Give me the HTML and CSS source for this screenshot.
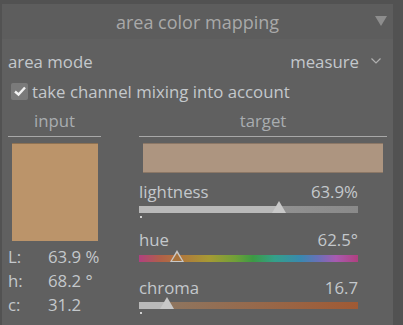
FILE: index.html
```html
<!DOCTYPE html>
<html>
<head>
<meta charset="utf-8">
<link rel="stylesheet" href="styles.css">
</head>
<body>
<div class="panel">
  <div class="header">
    <span class="title">area color mapping</span>
    <span class="collapse"></span>
  </div>
  <div class="content">
    <div class="row combo">
      <span>area mode</span>
      <span class="combo-value">measure <svg class="chev" width="12" height="8" viewBox="0 0 12 8"><path d="M1.5 1.5 L6 6 L10.5 1.5" fill="none" stroke="#b0b0b0" stroke-width="1.2"/></svg></span>
    </div>
    <div class="row check">
      <span class="box"><svg width="14" height="12" viewBox="0 0 14 12"><path d="M2 6.5 L5.5 9.5 L12 2.5" fill="none" stroke="#f2f2f2" stroke-width="2.4"/></svg></span>
      <span>take channel mixing into account</span>
    </div>
    <div class="columns">
      <div class="col-in">
        <div class="sect">input</div>
        <div class="swatch-in"></div>
        <div class="lab"><span>L:</span><span>63.9 %</span></div>
        <div class="lab"><span>h:</span><span>68.2 °</span></div>
        <div class="lab"><span>c:</span><span>31.2</span></div>
      </div>
      <div class="col-out">
        <div class="sect">target</div>
        <div class="swatch-out"></div>
        <div class="sliders">
          <div class="slider">
            <div class="sl-label"><span>lightness</span><span>63.9%</span></div>
            <div class="track light"><span class="fill" style="width:64%"></span><span class="marker" style="left:64%"></span></div>
            <div class="dot"></div>
          </div>
          <div class="slider">
            <div class="sl-label"><span>hue</span><span>62.5°</span></div>
            <div class="track hue"><span class="marker huem" style="left:17.4%"></span></div>
          </div>
          <div class="slider">
            <div class="sl-label"><span>chroma</span><span>16.7</span></div>
            <div class="track chroma"><span class="fill" style="width:13%"></span><span class="marker" style="left:13%"></span></div>
            <div class="dot"></div>
          </div>
        </div>
      </div>
    </div>
  </div>
</div>
</body>
</html>
```
FILE: styles.css
```css
html, body {
  margin: 0;
  padding: 0;
  background: #525252;
  width: 403px;
  height: 325px;
  overflow: hidden;
}
body {
  font-family: "Open Sans", "Noto Sans", sans-serif;
  color: #c4c8cc;
  padding: 4px 0 0 2px;
  box-sizing: border-box;
}
.panel {
  width: 391px;
  height: 321px;
  background: #606060;
}
.header {
  height: 35px;
  background: #5d5d5d;
  display: flex;
  align-items: center;
  justify-content: center;
  position: relative;
}
.title {
  font-size: 18px;
  color: #a9a9a9;
}
.collapse {
  position: absolute;
  right: 6px;
  top: 12px;
  width: 0;
  height: 0;
  border-left: 6px solid transparent;
  border-right: 6px solid transparent;
  border-top: 10px solid #8d8d8d;
}
.content {
  padding: 0 6px;
}
.row {
  display: flex;
  align-items: center;
  font-size: 16.8px;
}
.combo {
  height: 28px;
  margin-top: 8px;
  justify-content: space-between;
  padding-right: 5px;
}
.combo-value {
  display: flex;
  align-items: center;
  gap: 11px;
}
.check {
  height: 26px;
  gap: 4px;
  margin-left: 3px;
  margin-top: 3px;
}
.box {
  width: 17px;
  height: 17px;
  background: #7a7a7a;
  border-radius: 2px;
  display: flex;
  align-items: center;
  justify-content: center;
}
.columns {
  display: flex;
  gap: 38px;
  margin-top: 7px;
}
.col-in {
  width: 93px;
}
.col-out {
  width: 248px;
}
.sect {
  text-align: center;
  font-size: 16.8px;
  color: #a9adb0;
  height: 25px;
  line-height: 19px;
  border-bottom: 1px solid #a8a8a8;
}
.swatch-in {
  margin: 6px 3px 0 4px;
  height: 97px;
  background: #bb946a;
  border-top: 1px solid #8e7253;
}
.lab {
  display: flex;
  font-size: 16.8px;
  height: 24px;
  align-items: center;
}
.swatch-in + .lab { margin-top: 3px; }
.lab span:first-child { width: 40px; }
.swatch-out {
  margin: 6px 4px 0 4px;
  height: 30px;
  background: #ad9580;
  border-top: 1px solid #8b7766;
  border-bottom: 1px solid #8b7766;
  box-sizing: border-box;
}
.sliders {
  width: 219px;
  margin-top: 7px;
}
.slider {
  height: 48px;
  position: relative;
}
.sl-label {
  display: flex;
  justify-content: space-between;
  font-size: 16.8px;
  height: 22px;
  align-items: center;
}
.track {
  position: relative;
  height: 7px;
  margin-top: 4px;
}
.light { background: linear-gradient(to right, #9c9c9c, #8a8a8a); }
.hue {
  margin-top: 5px;
  background: linear-gradient(to right, #b0407f 0%, #b06048 10%, #b07a3c 20%, #a69a34 32%, #70a038 44%, #3c9a44 52%, #34a08a 62%, #3a88b0 74%, #6a70b8 82%, #a85ab0 90%, #b0407f 100%);
}
.chroma { background: linear-gradient(to right, #8c7a66, #a05a34); }
.fill {
  position: absolute;
  left: 0;
  top: 0;
  bottom: 0;
  background: #b9b9b9;
}
.marker {
  position: absolute;
  bottom: 0;
  margin-left: -7px;
  width: 0;
  height: 0;
  border-left: 7px solid transparent;
  border-right: 7px solid transparent;
  border-bottom: 12px solid #c8c8c8;
}
.huem::after {
  content: "";
  position: absolute;
  left: -5px;
  top: 3px;
  border-left: 5px solid transparent;
  border-right: 5px solid transparent;
  border-bottom: 8px solid #a7723c;
}
.dot {
  width: 2px;
  height: 2px;
  background: #d0d0d0;
  margin-top: 3px;
  margin-left: 1px;
}
```
